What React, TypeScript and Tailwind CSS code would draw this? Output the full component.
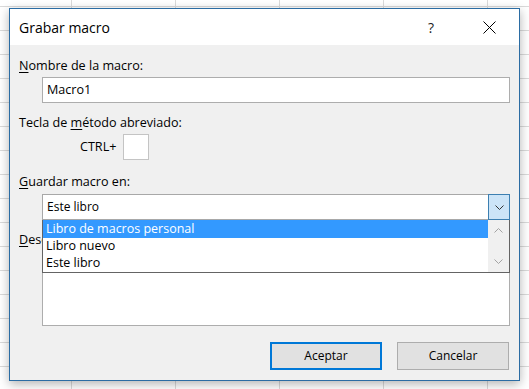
function ChevronDown({ className }: { className?: string }) {
  return (
    <svg width="9" height="5" viewBox="0 0 9 5" className={className} fill="none">
      <polyline points="0.5,0.5 4.5,4.5 8.5,0.5" stroke="currentColor" strokeWidth="1" />
    </svg>
  );
}

function ChevronUp({ className }: { className?: string }) {
  return (
    <svg width="9" height="5" viewBox="0 0 9 5" className={className} fill="none">
      <polyline points="0.5,4.5 4.5,0.5 8.5,4.5" stroke="currentColor" strokeWidth="1" />
    </svg>
  );
}

export default function App() {
  return (
    <div className="h-[389px] w-[529px] overflow-hidden bg-white bg-[linear-gradient(to_right,#dadada_1px,transparent_1px),linear-gradient(to_bottom,#dadada_1px,transparent_1px)] bg-[size:104px_24px] bg-[position:71px_6px] pl-[9px] pt-[8px] font-['Open_Sans',sans-serif] text-[12.6px] text-black">
      <div className="relative flex h-[373px] w-[511px] flex-col border border-[#2b6ca3] bg-[#f0f0f0] shadow-[0_3px_10px_rgba(0,0,0,0.3)]">
        {/* title bar */}
        <div className="flex h-[36px] items-center bg-white pr-[23px]">
          <span className="pl-[9px] pt-[1px] text-[14px]">Grabar macro</span>
          <span className="ml-auto w-[20px] text-center text-[14px] text-[#222]">?</span>
          <svg width="13" height="13" viewBox="0 0 13 13" className="ml-[42px]">
            <line x1="0.5" y1="0.5" x2="12.5" y2="12.5" stroke="#000" strokeWidth="1" />
            <line x1="12.5" y1="0.5" x2="0.5" y2="12.5" stroke="#000" strokeWidth="1" />
          </svg>
        </div>

        {/* body */}
        <div className="flex flex-1 flex-col pl-[9px]">
          <div className="mt-[13px] flex h-[17px] items-center">
            <span>
              <span className="underline underline-offset-2">N</span>ombre de la macro:
            </span>
          </div>
          <div className="ml-[23px] mt-[2px] flex h-[26px] w-[468px] items-center border border-[#adadad] bg-white pl-[4px]">
            Macro1
          </div>

          <div className="mt-[12px] flex h-[17px] items-center">
            <span>
              Tecla de <span className="underline underline-offset-2">m</span>étodo abreviado:
            </span>
          </div>
          <div className="mt-[2px] flex h-[26px] items-center">
            <span className="ml-[61px]">CTRL+</span>
            <div className="ml-[7px] h-[26px] w-[26px] border border-[#c4c4c4] bg-white" />
          </div>

          <div className="mt-[14px] flex h-[17px] items-center">
            <span>
              <span className="underline underline-offset-2">G</span>uardar macro en:
            </span>
          </div>
          <div className="ml-[23px] mt-[3px] flex h-[26px] w-[468px] items-stretch border border-[#a8a8a8] bg-white text-[12px]">
            <div className="flex flex-1 items-center pl-[4px]">Este libro</div>
            <div className="-my-px -mr-px flex w-[22px] items-center justify-center border border-[#3c7fb1] bg-[#cce4f7] text-[#333]">
              <ChevronDown />
            </div>
          </div>

          <div className="mt-[12px] flex h-[17px] items-center">
            <div className="w-[23px] overflow-hidden whitespace-nowrap">
              <span className="underline underline-offset-2">D</span>escripción:
            </div>
          </div>
          <div className="ml-[23px] mt-[2px] h-[75px] w-[468px] border border-[#adadad] bg-white" />

          <div className="mt-[16px] flex justify-end gap-[15px] pr-[10px] text-[12px]">
            <button className="h-[28px] w-[112px] border-2 border-[#0078d7] bg-[#e1e1e1]">Aceptar</button>
            <button className="h-[28px] w-[112px] border border-[#adadad] bg-[#e1e1e1]">Cancelar</button>
          </div>
        </div>

        {/* open dropdown list */}
        <div className="absolute left-[32px] top-[211px] z-10 flex h-[53px] w-[468px] border-x border-b border-[#646464] bg-white text-[12.5px]">
          <div className="flex w-[445px] flex-col">
            <div className="flex h-[18px] items-center bg-[#3399ff] pl-[3px] text-white">Libro de macros personal</div>
            <div className="flex h-[17px] items-center pl-[3px]">Libro nuevo</div>
            <div className="flex h-[17px] items-center pl-[3px]">Este libro</div>
          </div>
          <div className="flex flex-1 flex-col items-center justify-between bg-[#f0f0f0] py-[8px] text-[#a3a3a3]">
            <ChevronUp />
            <ChevronDown />
          </div>
        </div>
      </div>
    </div>
  );
}
